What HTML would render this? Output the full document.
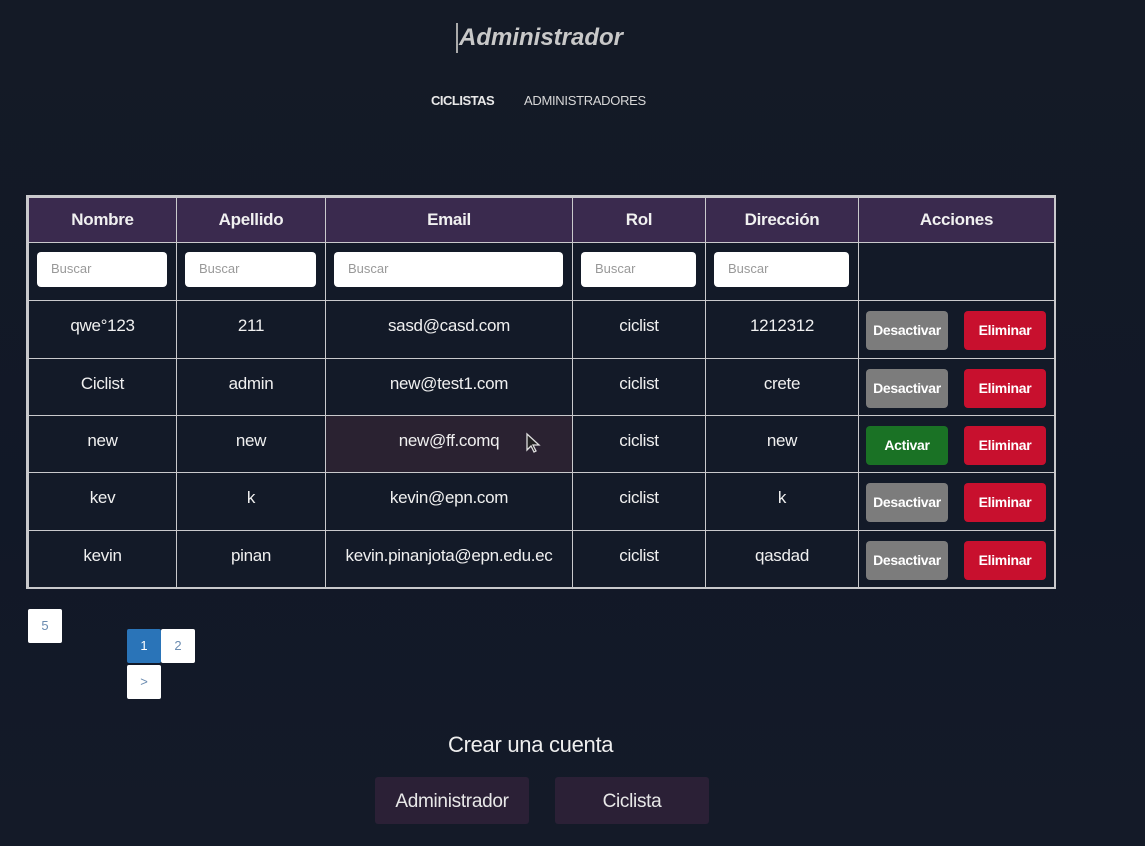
<!DOCTYPE html><html><head><style>
body{margin:0;width:1145px;height:846px;background:linear-gradient(180deg,#141a26 0%,#111827 60%,#141a28 100%);font-family:"Liberation Sans",sans-serif;color:#eee;position:relative;overflow:hidden}
.a{position:absolute}
.c{position:absolute;box-sizing:border-box;border:1px solid #c9c9cc;background:#131a28;text-align:center;font-size:17px;color:#f0f0f0;padding-top:15px;letter-spacing:-0.3px}
.h{background:#3a2a4e;font-weight:bold;font-size:17px;padding-top:12px}
.in{position:absolute;background:#fff;border-radius:4px;color:#999;font-size:13px;padding:0 0 0 14px;box-sizing:border-box;line-height:34px;height:34px}
.b{position:absolute;width:82px;height:39px;border-radius:4px;font-weight:bold;font-size:14px;color:#fff;text-align:center;line-height:39px;letter-spacing:-0.3px}
.g{background:#7c7c7c}.r{background:#c8102e}.gr{background:#1a7225}
.pg{position:absolute;background:#fff;color:#6a8bb0;font-size:13px;text-align:center;line-height:34px;width:34px;height:34px;border-radius:2px}
.cb{position:absolute;background:#2b2036;border-radius:3px;width:154px;height:47px;line-height:49px;text-align:center;font-size:19px;color:#e8e8e8;letter-spacing:-0.3px}
</style></head><body>
<div class="a" style="left:456px;top:23px;height:30px;border-left:2px solid #aaa"></div>
<div class="a" style="left:459px;top:24px;font-size:24px;font-weight:bold;font-style:italic;color:#c8c8c8">Administrador</div>
<div class="a" style="left:431px;top:93px;font-size:13px;font-weight:bold;color:#e8e8e8;letter-spacing:-0.5px">CICLISTAS</div>
<div class="a" style="left:524px;top:93px;font-size:13px;color:#d8d8d8;letter-spacing:-0.3px">ADMINISTRADORES</div>
<div class="a" style="left:26px;top:195px;width:1030px;height:394px;background:#c9c9cc"></div>
<div id="t"></div>
<div class="pg" style="left:28px;top:609px">5</div>
<div class="pg" style="left:127px;top:629px;background:#2a74b8;color:#fff">1</div>
<div class="pg" style="left:161px;top:629px">2</div>
<div class="pg" style="left:127px;top:665px">&gt;</div>
<div class="a" style="left:448px;top:732px;font-size:22px;color:#eee;letter-spacing:-0.3px">Crear una cuenta</div>
<div class="cb" style="left:375px;top:777px">Administrador</div>
<div class="cb" style="left:555px;top:777px">Ciclista</div>
<svg class="a" style="left:525px;top:432px" width="18" height="22"><path d="M2 2 L2 18 L6 14 L9 20 L11 19 L8 13 L14 13 Z" fill="#222" stroke="#ddd" stroke-width="1.3"/></svg>
<script>
var X=[28,176,325,572,705,858,1054],Y=[197,242,300,358,415,472,530,587];
var H=["Nombre","Apellido","Email","Rol","Dirección","Acciones"];
var D=[["qwe°123","211","sasd@casd.com","ciclist","1212312",0],["Ciclist","admin","new@test1.com","ciclist","crete",0],["new","new","new@ff.comq","ciclist","new",1],["kev","k","kevin@epn.com","ciclist","k",0],["kevin","pinan","kevin.pinanjota@epn.edu.ec","ciclist","qasdad",0]];
var s="";
for(var r=0;r<7;r++)for(var c=0;c<6;c++){
var st="left:"+X[c]+"px;top:"+Y[r]+"px;width:"+(X[c+1]-X[c]+1)+"px;height:"+(Y[r+1]-Y[r]+1)+"px;";
if(r==0){s+='<div class="c h" style="'+st+'">'+H[c]+'</div>';continue}
if(r==1){s+='<div class="c" style="'+st+'"></div>';if(c<5)s+='<div class="in" style="left:'+(X[c]+9)+'px;top:'+(Y[1]+10)+'px;width:'+(X[c+1]-X[c]-18)+'px;height:35px">Buscar</div>';continue}
var d=D[r-2];
if(c<5){var ex=(r==4&&c==2)?"background:#2a2231;padding-left:0px;":"";s+='<div class="c" style="'+st+ex+'">'+d[c]+'</div>'}
else{s+='<div class="c" style="'+st+'"></div>';var y=Y[r]+11;
s+=d[5]?'<div class="b gr" style="left:866px;top:'+y+'px">Activar</div>':'<div class="b g" style="left:866px;top:'+y+'px">Desactivar</div>';
s+='<div class="b r" style="left:964px;top:'+y+'px">Eliminar</div>'}}
document.getElementById("t").innerHTML=s;
</script>
</body></html>
